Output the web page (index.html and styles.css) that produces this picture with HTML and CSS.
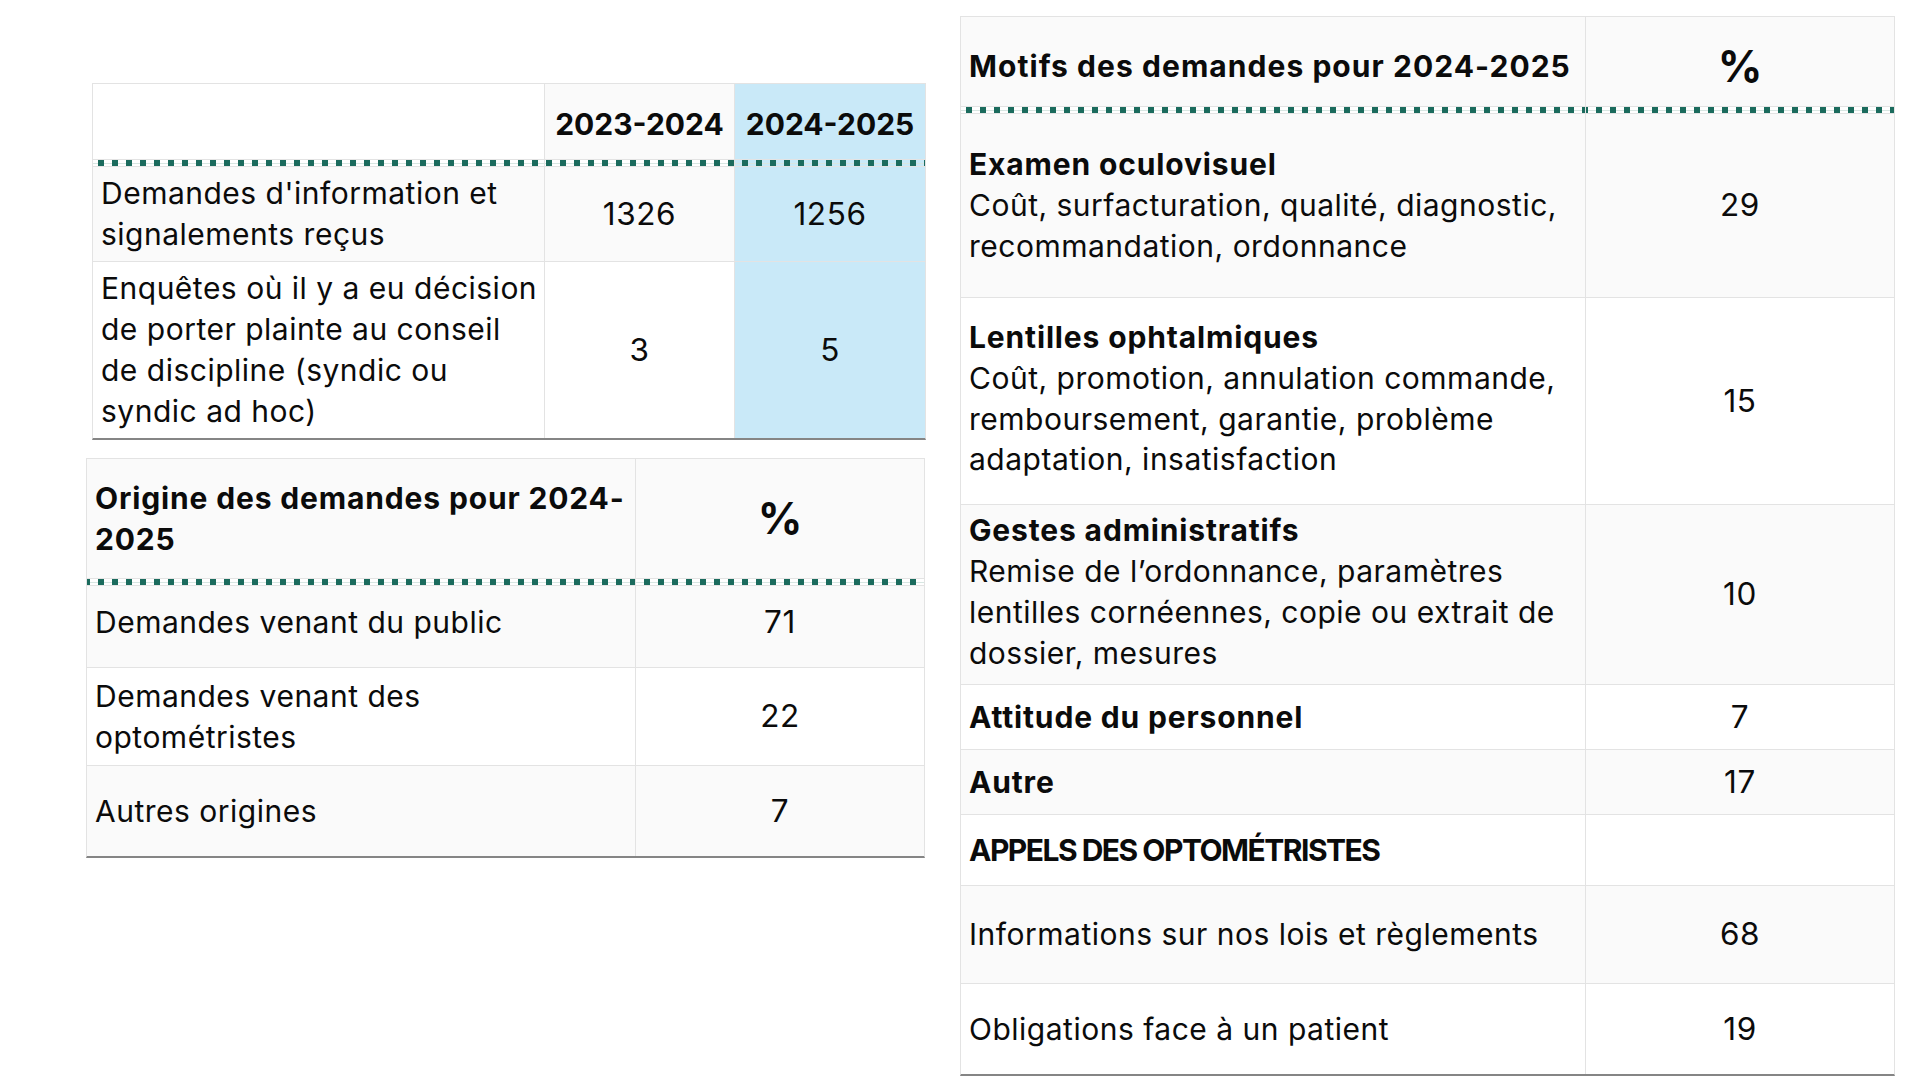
FILE: index.html
```html
<!DOCTYPE html>
<html lang="fr">
<head>
<meta charset="utf-8">
<title>Demandes</title>
<link rel="stylesheet" href="styles.css">
</head>
<body>
<div class="page">
  <div class="left">
    <div class="tbl t1">
      <div class="c hd white"></div>
      <div class="c hd ctr b yr">2023-2024</div>
      <div class="c hd ctr b yr blue">2024-2025</div>
      <div class="sep"></div>
      <div class="sep"></div>
      <div class="sep blue"></div>
      <div class="c alt">Demandes d'information et<br>signalements reçus</div>
      <div class="c ctr num alt">1326</div>
      <div class="c ctr num blue">1256</div>
      <div class="c">Enquêtes où il y a eu décision<br>de porter plainte au conseil<br>de discipline (syndic ou<br>syndic ad hoc)</div>
      <div class="c ctr num">3</div>
      <div class="c ctr num blue">5</div>
    </div>

    <div class="tbl t2">
      <div class="c hd b">Origine des demandes pour 2024-<br>2025</div>
      <div class="c hd ctr pct">%</div>
      <div class="sep"></div>
      <div class="sep"></div>
      <div class="c alt up4">Demandes venant du public</div>
      <div class="c ctr num alt up4">71</div>
      <div class="c">Demandes venant des<br>optométristes</div>
      <div class="c ctr num">22</div>
      <div class="c alt">Autres origines</div>
      <div class="c ctr num alt">7</div>
    </div>
  </div>

  <div class="right">
    <div class="tbl t3">
      <div class="c hd hd3 b wide">Motifs des demandes pour 2024-2025</div>
      <div class="c hd hd3 ctr pct">%</div>
      <div class="sep"></div>
      <div class="sep"></div>
      <div class="c alt"><div><span class="b">Examen oculovisuel</span><br>Coût, surfacturation, qualité, diagnostic,<br>recommandation, ordonnance</div></div>
      <div class="c ctr num alt">29</div>
      <div class="c up5"><div><span class="b">Lentilles ophtalmiques</span><br>Coût, promotion, annulation commande,<br>remboursement, garantie, problème<br>adaptation, insatisfaction</div></div>
      <div class="c ctr num">15</div>
      <div class="c alt up5"><div><span class="b">Gestes administratifs</span><br>Remise de l’ordonnance, paramètres<br>lentilles cornéennes, copie ou extrait de<br>dossier, mesures</div></div>
      <div class="c ctr num alt">10</div>
      <div class="c b">Attitude du personnel</div>
      <div class="c ctr num">7</div>
      <div class="c b alt">Autre</div>
      <div class="c ctr num alt">17</div>
      <div class="c b caps">APPELS DES OPTOMÉTRISTES</div>
      <div class="c"></div>
      <div class="c alt">Informations sur nos lois et règlements</div>
      <div class="c ctr num alt">68</div>
      <div class="c">Obligations face à un patient</div>
      <div class="c ctr num">19</div>
    </div>
  </div>
</div>
</body>
</html>
```

FILE: styles.css
```css
* { box-sizing: border-box; }

html, body {
  margin: 0;
  padding: 0;
  background: #ffffff;
}

body {
  font-family: Inter, "Open Sans", "DejaVu Sans", sans-serif;
  font-size: 30px;
  line-height: 40.8px;
  color: #0b0b0b;
  letter-spacing: 0.5px;
}

.page {
  display: flex;
  align-items: flex-start;
}

.left {
  margin: 83px 0 0 86px;
  width: 839px;
  display: flex;
  flex-direction: column;
  gap: 18px;
}

.right {
  margin: 16px 0 0 35px;
  width: 935px;
}

.tbl {
  display: grid;
  gap: 1px;
  background: #e3e3e3;
  border: 1px solid #e3e3e3;
  border-bottom: 2px solid #858585;
}

.t1 {
  margin-left: 6px;
  width: 834px;
  grid-template-columns: 451px 189px 1fr;
  grid-template-rows: 75px 6px 94px 176px;
}

.t2 {
  width: 839px;
  grid-template-columns: 548px 1fr;
  grid-template-rows: 119px 6px 81px 97px 90px;
}

.t3 {
  width: 935px;
  grid-template-columns: 624px 1fr;
  grid-template-rows: 89px 6px 183px 206px 179px 64px 64px 70px 97px 90px;
}

.c {
  display: flex;
  align-items: center;
  padding: 0 8px;
  background: #ffffff;
  white-space: nowrap;
}

.ctr {
  justify-content: center;
  text-align: center;
}

.hd { background: #fafafa; }
.hd.white { background: #ffffff; }
.t1 .hd { padding-top: 5px; }
.hd3 { padding-top: 10px; }
.alt { background: #fafafa; }

.up4 { padding-bottom: 8px; }
.up5 { padding-bottom: 5px; }

.b { font-weight: 700; letter-spacing: 0.85px; }
.b.wide { letter-spacing: 1.05px; }
.yr { letter-spacing: 0; }
.caps { letter-spacing: -1.5px; }

.num {
  font-size: 31.5px;
  letter-spacing: 0.6px;
}

.pct {
  font-size: 44px;
  font-weight: 700;
  letter-spacing: 0;
}

.blue,
.hd.blue { background: #c9e9f8; }

.sep {
  background-color: #ffffff;
  background-image:
    repeating-linear-gradient(to right, #1b6b5d 0 6px, transparent 6px 14px),
    linear-gradient(#d7e6e2, #d7e6e2);
  background-size: 100% 100%, 100% 1px;
  background-position: 0 0, 0 50%;
  background-repeat: no-repeat;
  background-attachment: fixed, scroll;
}

.sep.blue { background-color: #c9e9f8; }
```
